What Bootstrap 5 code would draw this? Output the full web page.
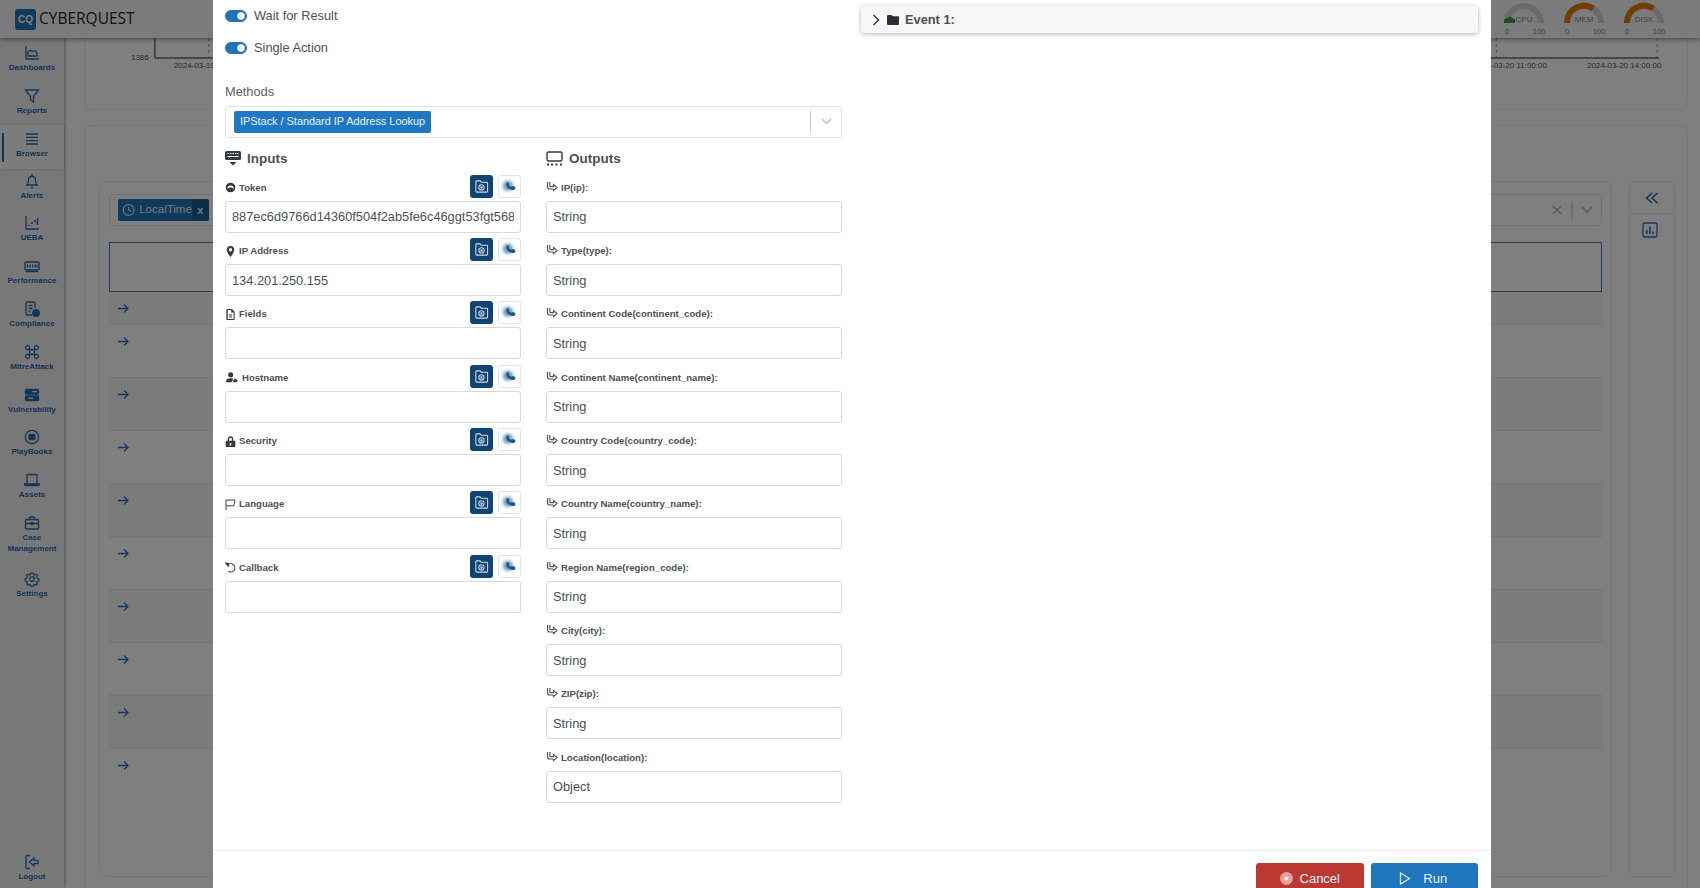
<!DOCTYPE html>
<html lang="en">
<head>
<meta charset="utf-8">
<title>CyberQuest</title>
<link href="https://cdn.jsdelivr.net/npm/bootstrap@5.3.0/dist/css/bootstrap.min.css" rel="stylesheet">
<script src="https://cdn.jsdelivr.net/npm/bootstrap@5.3.0/dist/js/bootstrap.bundle.min.js"></script>
<style>
html,body{height:888px;overflow:hidden;background:#fff;font-family:"Liberation Sans",Arial,sans-serif;color:#495057}
.app-top{height:38px;background:#f6f6f6;box-shadow:0 2px 4px rgba(0,0,0,.35);position:relative;z-index:3;padding-left:15px}
.brand-mark{width:21px;height:21px;background:#1f74b8;border-radius:3px;color:#fff;font-size:10px;font-weight:700;line-height:21px;text-align:center}
.brand-word{font-family:"Open Sans","Liberation Sans",sans-serif;font-size:15.500px;font-weight:500;color:#1c2430;margin-left:3px}
.gauge-set{margin-left:auto;padding-right:36px;gap:20px}
.gauge-set svg{overflow:visible}
.gauge-set text{font-family:"Liberation Sans",sans-serif;fill:#888;text-anchor:middle}
.app-body{height:850px}
.side-nav{width:64px;background:#f1f1f1;box-shadow:1px 0 3px rgba(0,0,0,.35);z-index:2;padding-top:3px}
.nav-cell{min-height:42.800px;color:#2a6cae;font-size:8px;font-weight:700;line-height:11.500px;text-align:center;padding-top:4px;position:relative}
.nav-cell svg{display:block;margin:0 auto 1px;width:16px;height:16px;fill:none;stroke:#2a6cae;stroke-width:1.300}
.nav-on{background:#f8f8f8;box-shadow:0 0 2px rgba(0,0,0,.25);margin-top:-2px;padding-top:6px;min-height:44px}
.nav-on::before{content:"";position:absolute;left:2px;top:8px;bottom:7px;width:1.500px;background:#1f6fb0}
.nav-case{min-height:56px}
.nav-foot{margin-top:auto;padding-bottom:6px;min-height:0}
.stage{padding-left:20px;padding-right:12px;overflow:hidden}
.panel-a{height:72px;border:1px solid #efefef;border-top:0;border-radius:0 0 8px 8px}
.panel-b{height:800px;margin-top:15px;border:1px solid #efefef;border-radius:8px;padding:55px 12px 0 14px;gap:17px}
.panel-main{height:696px;border:1px solid #ececec;border-radius:8px;padding:12px 9px 0}
.panel-side{width:46px;height:696px;border:1px solid #ececec;border-radius:6px 6px 0 0}
.side-tool{height:32px;border-bottom:1px solid #ececec}
.filter-bar{height:32px;border:1px solid #e3e3e3;border-radius:5px;padding:0 8px}
.time-chip{height:22px;background:#1f74b8;color:#eaf3fb;border-radius:2px;font-size:11.500px;width:91px;overflow:hidden}
.chip-x{margin-left:auto;background:#175d96;width:18px;height:22px;text-align:center;font-size:11px;font-weight:700;line-height:22px}
.query-box{height:50px;margin-top:16px;border:1px solid #4a7cba}
.data-row{height:53px;padding:11px 0 0 9px;border-bottom:1px solid #e8e8e8}
.data-row.first{height:33px}
.data-row.tint{background:#f7f7f7}
.sheet{display:block}
.sheet-dialog{max-width:none;width:1278px;margin:0 0 0 213px}
.sheet-dialog .modal-content{border:0;border-radius:0;height:900px;color:#495057}
.sheet-body{padding:0 13px 0 12px;height:850px;flex:none}
.twin{display:grid;grid-template-columns:617px 617px;column-gap:19px}
.switch-row{margin:0;padding:0;font-size:12.800px;line-height:16px;display:flex;align-items:center;gap:7px;height:32px}
.switch-row .form-check-input{width:22px;height:12px;margin:0;float:none;background-color:#1f74b8;border-color:#1f74b8}
.caption{font-size:12.800px;line-height:16px;margin:20px 0 6px;color:#5a6268}
.select-box{height:32px;border:1px solid #dfe2e8;border-radius:3px;padding:0 0 1px 8px}
.select-chip{height:22px;background:#2078c3;color:#eaf3fb;border-radius:2px;font-size:10.900px;line-height:21px;padding:0 6px}
.select-tail{margin-left:auto;width:31px;height:21px;border-left:1px solid #ccc}
.field-cols{display:grid;grid-template-columns:296px 296px;column-gap:25px}
.group-title{font-size:13.500px;font-weight:700;color:#495057;height:21.500px;margin-top:10px;gap:6px;line-height:22px}
.field-head{height:26px;font-size:9.600px;font-weight:700;line-height:12px;color:#495057;gap:3px;margin-top:5.330px}
.field-head svg.gl{width:11px;height:11px;flex:none;fill:#333a42}
.out-ic{width:12px;height:11px;fill:none;stroke:#555;stroke-width:1.200;flex:none;margin-top:-3px}
.square-btn{width:23px;height:23px;border-radius:3px;padding:0;display:flex;align-items:center;justify-content:center;margin-bottom:3px}
.sq-dark{background:#0f4573;margin-left:auto;margin-right:2px}
.sq-dark svg{width:15px;height:15px;fill:none;stroke:#cfdde9;stroke-width:1.100}
.sq-light{background:#fff;border:1px solid #e1e5ea}
.sq-light svg{width:17px;height:17px}
.text-field{height:32px;font-size:12.800px;padding:0 6px;border:1px solid #d5d9e0;border-radius:3px;color:#495057;background:#fff}
.text-field:focus{box-shadow:none}
.event-bar{height:27px;margin-top:6px;background:#f7f7f7;border-radius:3px;box-shadow:0 1px 5px rgba(0,0,0,.3);font-size:12.800px;font-weight:700;color:#495057;padding-left:11px;gap:6px}
.sheet-foot{height:50px;border-top:1px solid #e9e8f0;padding:12px 13px 0 0;display:flex;justify-content:flex-end;gap:7px;align-items:flex-start;flex-wrap:nowrap}
.foot-btn{width:107.500px;height:31px;margin:0;border-radius:3px;border:0;color:#eaf1f8;font-size:13px;padding:0;display:flex;align-items:center;justify-content:center;gap:7px}
.btn-stop{background:#bb3833}
.btn-stop:hover{background:#bb3833}
.btn-go{background:#2076bd;gap:12px;padding-right:2px}
.btn-go:hover{background:#2076bd}
</style>
</head>
<body>
<svg width="0" height="0" class="position-absolute">
<defs>
<filter id="soft" x="-50%" y="-50%" width="200%" height="200%"><feGaussianBlur stdDeviation="1.300"/></filter>
<symbol id="cam" viewBox="0 0 16 16"><path d="M3 2h3.500l1.200 1.500h5.800a1 1 0 0 1 1 1v8.500a1 1 0 0 1-1 1h-10.500a1 1 0 0 1-1-1V3a1 1 0 0 1 1-1z"/><circle cx="8" cy="9" r="2.800"/><circle cx="8" cy="9" r=".8"/></symbol>
<symbol id="blob" viewBox="0 0 16 16"><circle cx="6.500" cy="7.500" r="4.800" fill="#6f9cc2" filter="url(#soft)"/><path d="M6.500 4c1 .2 1.200 2 .9 2.800.8 1 1.500 1.300 2.300 1.400.8-.7 3.600-.5 3.800.9.200 1.500-1 2.500-2.900 2.200C8 10.800 5 8.500 5 6c0-1.200.6-2.100 1.500-2z" fill="#1d5587"/></symbol>
<symbol id="link" viewBox="0 0 12 11"><path d="M1.500 1v4.500c0 1.500 1 2.500 2.500 2.500h3"/><path d="M3.800 1v3.500c0 .8.400 1.200 1.200 1.200h2.500V3.500l3.500 3-3.500 3V8"/></symbol>
<symbol id="fwd" viewBox="0 0 11 11"><path d="M0 5.500h10M6 1.500l4 4-4 4"/></symbol>
</defs>
</svg>

<div class="app-top d-flex align-items-center">
  <div class="brand-mark">CQ</div>
  <div class="brand-word">CYBERQUEST</div>
  <div class="gauge-set d-flex">
    <svg width="40" height="33" viewBox="0 0 40 33"><path d="M0 20a20 20 0 0 1 40 0h-6a14 14 0 0 0-28 0z" fill="#d4d4d4"/><path d="M0 20v-3.500l6-3 5 3v3.500z" fill="#3f9a3a"/><text x="20" y="19" font-size="8">CPU</text><text x="3" y="31" font-size="7.600">0</text><text x="35" y="31" font-size="7.600">100</text></svg>
    <svg width="40" height="33" viewBox="0 0 40 33"><path d="M0 20a20 20 0 0 1 40 0h-6a14 14 0 0 0-28 0z" fill="#d4d4d4"/><path d="M0 20a20 20 0 0 1 31-17l-3.500 5A14 14 0 0 0 6 20z" fill="#e57a00"/><text x="20" y="19" font-size="8">MEM</text><text x="3" y="31" font-size="7.600">0</text><text x="35" y="31" font-size="7.600">100</text></svg>
    <svg width="40" height="33" viewBox="0 0 40 33"><path d="M0 20a20 20 0 0 1 40 0h-6a14 14 0 0 0-28 0z" fill="#d4d4d4"/><path d="M0 20a20 20 0 0 1 31-17l-3.500 5A14 14 0 0 0 6 20z" fill="#e57a00"/><text x="20" y="19" font-size="8">DISK</text><text x="3" y="31" font-size="7.600">0</text><text x="35" y="31" font-size="7.600">100</text></svg>
  </div>
</div>

<div class="app-body d-flex">
  <nav class="side-nav d-flex flex-column">
    <div class="nav-cell"><svg viewBox="0 0 16 16"><path d="M2 1v13h13"/><path d="M4 11V7l2.500-2 2 1.500 2-1 2.500 2v3.500z"/></svg>Dashboards</div>
    <div class="nav-cell"><svg viewBox="0 0 16 16"><path d="M1.500 2h13L9.500 8.500V14l-3-2V8.500z"/></svg>Reports</div>
    <div class="nav-cell nav-on"><svg viewBox="0 0 16 16"><path d="M2 3h12M2 6.300h12M2 9.600h12M2 13h12"/></svg>Browser</div>
    <div class="nav-cell"><svg viewBox="0 0 16 16"><path d="M3 12c1-1 1.500-2 1.500-5a3.500 3.500 0 0 1 7 0c0 3 .5 4 1.500 5z"/><path d="M7 14.500h2M8 1v2"/></svg>Alerts</div>
    <div class="nav-cell"><svg viewBox="0 0 16 16"><path d="M2 1v13h13"/><path d="M5 11v-1M8 9V7M11 7V5M13.500 10V3" stroke-width="1.500"/></svg>UEBA</div>
    <div class="nav-cell"><svg viewBox="0 0 16 16"><rect x="1" y="4" width="14" height="8" rx="1"/><path d="M3.500 6.500v3M6 6.500v3M8.500 6.500v3M11 6.500v3M13 6.500v3M2 13.500h12"/></svg>Performance</div>
    <div class="nav-cell"><svg viewBox="0 0 16 16"><path d="M11 7V2a1 1 0 0 0-1-1H3a1 1 0 0 0-1 1v11a1 1 0 0 0 1 1h5"/><path d="M4.500 4.500h4M4.500 7.500h4M4.500 10.500h2"/><circle cx="12" cy="12" r="3.300" fill="#2a6cae"/></svg>Compliance</div>
    <div class="nav-cell"><svg viewBox="0 0 16 16"><path d="M5.500 5.500h5v5h-5zM5.500 5.500H4A2 2 0 1 1 5.500 4zM10.500 5.500H12A2 2 0 1 0 10.500 4zM5.500 10.500H4A2 2 0 1 0 5.500 12zM10.500 10.500H12A2 2 0 1 1 10.500 12z"/></svg>MitreAttack</div>
    <div class="nav-cell"><svg viewBox="0 0 16 16"><rect x="1.500" y="2.500" width="13" height="4.500" rx="1" fill="#2a6cae"/><rect x="1.500" y="9" width="13" height="4.500" rx="1" fill="#2a6cae"/><path d="M8 4.700h5M4 11.200h5" stroke="#f1f1f1"/></svg>Vulnerability</div>
    <div class="nav-cell"><svg viewBox="0 0 16 16"><circle cx="8" cy="8" r="6.700"/><rect x="5.200" y="5.500" width="2.300" height="5" rx=".6" fill="#2a6cae"/><rect x="8.500" y="5.500" width="2.300" height="5" rx=".6" fill="#2a6cae"/></svg>PlayBooks</div>
    <div class="nav-cell"><svg viewBox="0 0 16 16"><path d="M3 11V3.500a1 1 0 0 1 1-1h8a1 1 0 0 1 1 1V11"/><path d="M.5 12h15c0 1-.7 1.500-1.500 1.500H2c-.8 0-1.500-.5-1.500-1.500z"/></svg>Assets</div>
    <div class="nav-cell nav-case"><svg viewBox="0 0 16 16"><rect x="1.500" y="4.500" width="13" height="9.500" rx="1"/><path d="M5.500 4.500V3a1 1 0 0 1 1-1h3a1 1 0 0 1 1 1v1.500M1.500 8.500h13"/><rect x="7" y="7.700" width="2" height="1.600" fill="#2a6cae"/></svg>Case<br>Management</div>
    <div class="nav-cell"><svg viewBox="0 0 16 16"><circle cx="8" cy="8" r="2.300"/><path d="M6.800 1.200h2.400l.4 1.800 1.300.6 1.600-1 1.700 1.700-1 1.600.6 1.300 1.800.4v2.400l-1.800.4-.6 1.300 1 1.600-1.700 1.700-1.600-1-1.300.6-.4 1.800H6.800l-.4-1.800-1.300-.6-1.600 1-1.700-1.700 1-1.600-.6-1.300-1.800-.4V7.600l1.800-.4.600-1.300-1-1.600 1.700-1.700 1.600 1 1.300-.6z" transform="translate(.8 .8) scale(.9)"/></svg>Settings</div>
    <div class="nav-cell nav-foot"><svg viewBox="0 0 16 16"><path d="M6 1.500H3a1 1 0 0 0-1 1v11a1 1 0 0 0 1 1h3"/><path d="M5.500 8l4.500-4v2.300h4v3.400h-4V12z"/></svg>Logout</div>
  </nav>

  <main class="stage flex-grow-1">
    <div class="panel-a">
      <svg width="100%" height="40" viewBox="0 0 1604 40" class="d-block">
        <path d="M70 0v20H1576" stroke="#222" fill="none"/>
        <path d="M124 0v20M1413 0v20M1574 0v20" stroke="#999" stroke-dasharray="3 3" fill="none"/>
        <text x="46" y="22" font-size="8" fill="#555" font-family="Liberation Sans">1386</text>
        <text x="89" y="30" font-size="8" fill="#555" font-family="Liberation Sans">2024-03-19</text>
        <text x="1390" y="30" font-size="8" fill="#555" font-family="Liberation Sans">2024-03-20 11:00:00</text>
        <text x="1504" y="30" font-size="8" fill="#555" font-family="Liberation Sans">2024-03-20 14:00:00</text>
      </svg>
    </div>
    <div class="panel-b d-flex">
      <div class="panel-main flex-grow-1">
        <div class="filter-bar d-flex align-items-center">
          <div class="time-chip d-flex align-items-center"><svg width="14" height="14" viewBox="0 0 16 16" class="mx-1 flex-none" fill="none" stroke="#dfeaf4" stroke-width="1.400"><circle cx="8" cy="8" r="6.500"/><path d="M8 4v4.300l3 1.500"/></svg>LocalTime<span class="chip-x">x</span></div>
          <svg class="ms-auto" width="44" height="22" viewBox="0 0 44 22" fill="none" stroke="#bbb" stroke-width="1.500"><path d="M4 7l8 8M12 7l-8 8"/><path d="M23 2v18" stroke-width="1"/><path d="M33 8l5 5 5-5"/></svg>
        </div>
        <div class="query-box"></div>
        <div class="data-row first tint"><svg width="11" height="11" fill="none" stroke="#2f68d0" stroke-width="1.300" class="d-block"><use href="#fwd"/></svg></div>
        <div class="data-row"><svg width="11" height="11" fill="none" stroke="#2f68d0" stroke-width="1.300" class="d-block"><use href="#fwd"/></svg></div>
        <div class="data-row tint"><svg width="11" height="11" fill="none" stroke="#2f68d0" stroke-width="1.300" class="d-block"><use href="#fwd"/></svg></div>
        <div class="data-row"><svg width="11" height="11" fill="none" stroke="#2f68d0" stroke-width="1.300" class="d-block"><use href="#fwd"/></svg></div>
        <div class="data-row tint"><svg width="11" height="11" fill="none" stroke="#2f68d0" stroke-width="1.300" class="d-block"><use href="#fwd"/></svg></div>
        <div class="data-row"><svg width="11" height="11" fill="none" stroke="#2f68d0" stroke-width="1.300" class="d-block"><use href="#fwd"/></svg></div>
        <div class="data-row tint"><svg width="11" height="11" fill="none" stroke="#2f68d0" stroke-width="1.300" class="d-block"><use href="#fwd"/></svg></div>
        <div class="data-row"><svg width="11" height="11" fill="none" stroke="#2f68d0" stroke-width="1.300" class="d-block"><use href="#fwd"/></svg></div>
        <div class="data-row tint"><svg width="11" height="11" fill="none" stroke="#2f68d0" stroke-width="1.300" class="d-block"><use href="#fwd"/></svg></div>
        <div class="data-row border-0"><svg width="11" height="11" fill="none" stroke="#2f68d0" stroke-width="1.300" class="d-block"><use href="#fwd"/></svg></div>
      </div>
      <div class="panel-side">
        <div class="side-tool d-flex justify-content-center align-items-center"><svg width="14" height="14" viewBox="0 0 14 14" fill="none" stroke="#2a6cae" stroke-width="1.600"><path d="M7 2L1.500 7 7 12M12.500 2L7 7l5.500 5"/></svg></div>
        <div class="d-flex justify-content-center pt-2 pe-1"><svg width="16" height="16" viewBox="0 0 16 16" fill="none" stroke="#2a6cae" stroke-width="1.300"><rect x="1" y="1" width="14" height="14" rx="1.500"/><path d="M4.800 12V8M8 12V4.500M11.200 12V9.500" stroke-width="1.600"/></svg></div>
      </div>
    </div>
  </main>
</div>

<div class="modal-backdrop fade show"></div>

<div class="modal sheet" tabindex="-1">
  <div class="modal-dialog sheet-dialog">
    <div class="modal-content">
      <div class="modal-body sheet-body">
        <div class="twin">
          <div>
            <div class="form-check form-switch switch-row"><input class="form-check-input" type="checkbox" role="switch" checked id="sw1"><label for="sw1">Wait for Result</label></div>
            <div class="form-check form-switch switch-row"><input class="form-check-input" type="checkbox" role="switch" checked id="sw2"><label for="sw2">Single Action</label></div>
            <div class="caption">Methods</div>
            <div class="select-box d-flex align-items-center">
              <span class="select-chip">IPStack / Standard IP Address Lookup</span>
              <span class="select-tail d-flex align-items-center justify-content-center"><svg width="11" height="7" viewBox="0 0 11 7" fill="none" stroke="#bbb" stroke-width="1.300"><path d="M1 1l4.500 4.500L10 1"/></svg></span>
            </div>
            <div class="field-cols">
              <div>
                <div class="group-title d-flex align-items-center"><svg width="16" height="15" viewBox="0 0 16 15" fill="#333a42"><path d="M1.500 0h13A1.500 1.500 0 0 1 16 1.500v6A1.500 1.500 0 0 1 14.500 9h-13A1.500 1.500 0 0 1 0 7.500v-6A1.500 1.500 0 0 1 1.500 0z"/><path d="M2.500 2.500h1.500M5 2.500h1.500M7.500 2.500H9M10 2.500h1.500M12 2.500h1.500M2.500 5.500h11" stroke="#fff" stroke-width="1.200"/><path d="M4.500 11h7L8 14.500z"/></svg>Inputs</div>

                <div class="field-head d-flex align-items-center"><svg class="gl" viewBox="0 0 16 16"><path d="M8 1a7 7 0 1 0 0 14A7 7 0 0 0 8 1zM3.500 9.500c-.5-3 2-4.500 4.500-4.500s5 1.500 4.500 4.500c-1.200.2-2-.7-2.500-1.500H6c-.5.8-1.300 1.700-2.500 1.500z" fill-rule="evenodd"/></svg><span>Token</span><button type="button" class="btn square-btn sq-dark"><svg><use href="#cam"/></svg></button><button type="button" class="btn square-btn sq-light"><svg><use href="#blob"/></svg></button></div>
                <input class="form-control text-field" value="887ec6d9766d14360f504f2ab5fe6c46ggt53fgt568">

                <div class="field-head d-flex align-items-center"><svg class="gl" viewBox="0 0 16 16"><path d="M8 0a5.500 5.500 0 0 0-5.500 5.500C2.500 9.500 8 16 8 16s5.500-6.500 5.500-10.500A5.500 5.500 0 0 0 8 0zm0 8a2.500 2.500 0 1 1 0-5 2.500 2.500 0 0 1 0 5z"/></svg><span>IP Address</span><button type="button" class="btn square-btn sq-dark"><svg><use href="#cam"/></svg></button><button type="button" class="btn square-btn sq-light"><svg><use href="#blob"/></svg></button></div>
                <input class="form-control text-field" value="134.201.250.155">

                <div class="field-head d-flex align-items-center"><svg class="gl" viewBox="0 0 16 16"><path d="M3 0h7l4 4v10.500a1.500 1.500 0 0 1-1.500 1.500h-9A1.500 1.500 0 0 1 2 14.500v-13A1.500 1.500 0 0 1 3 0zm1 1.500v13h8.500V5H9V1.500zM5.500 8h5v1.500h-5zM5.500 11h5v1.500h-5z" fill-rule="evenodd"/></svg><span>Fields</span><button type="button" class="btn square-btn sq-dark"><svg><use href="#cam"/></svg></button><button type="button" class="btn square-btn sq-light"><svg><use href="#blob"/></svg></button></div>
                <input class="form-control text-field">

                <div class="field-head d-flex align-items-center"><svg class="gl" style="width:14px" viewBox="0 0 18 16"><circle cx="7" cy="4" r="3.700"/><path d="M0 15c0-4 2.500-6 7-6 1.500 0 2.700.2 3.700.7L8.500 15z"/><path d="M10 13l3-3.500 4.500 2.500-2 3h-4z"/></svg><span>Hostname</span><button type="button" class="btn square-btn sq-dark"><svg><use href="#cam"/></svg></button><button type="button" class="btn square-btn sq-light"><svg><use href="#blob"/></svg></button></div>
                <input class="form-control text-field">

                <div class="field-head d-flex align-items-center"><svg class="gl" viewBox="0 0 16 16"><path d="M4 7V4.500a4 4 0 0 1 8 0V7h1.500A1 1 0 0 1 15 8v7a1 1 0 0 1-1 1H2a1 1 0 0 1-1-1V8a1 1 0 0 1 1-1zm2 0h4V4.500a2 2 0 0 0-4 0zm2 3a1.500 1.500 0 0 0-.7 2.800V14h1.400v-1.200A1.500 1.500 0 0 0 8 10z" fill-rule="evenodd"/></svg><span>Security</span><button type="button" class="btn square-btn sq-dark"><svg><use href="#cam"/></svg></button><button type="button" class="btn square-btn sq-light"><svg><use href="#blob"/></svg></button></div>
                <input class="form-control text-field">

                <div class="field-head d-flex align-items-center"><svg class="gl" viewBox="0 0 16 16" style="fill:none;stroke:#333a42;stroke-width:1.400"><path d="M1.500 16V1.500h13L13 10H1.500"/></svg><span>Language</span><button type="button" class="btn square-btn sq-dark"><svg><use href="#cam"/></svg></button><button type="button" class="btn square-btn sq-light"><svg><use href="#blob"/></svg></button></div>
                <input class="form-control text-field">

                <div class="field-head d-flex align-items-center"><svg class="gl" viewBox="0 0 16 16" style="fill:none;stroke:#333a42;stroke-width:1.500"><path d="M3.500 5A6 6 0 1 1 5 13.500"/><path d="M1 1.500l4 .5-.5 4z" fill="#333a42"/></svg><span>Callback</span><button type="button" class="btn square-btn sq-dark"><svg><use href="#cam"/></svg></button><button type="button" class="btn square-btn sq-light"><svg><use href="#blob"/></svg></button></div>
                <input class="form-control text-field">
              </div>

              <div>
                <div class="group-title d-flex align-items-center"><svg width="17" height="15" viewBox="0 0 17 15" fill="none" stroke="#333a42" stroke-width="1.400"><rect x="1" y="1" width="15" height="9" rx="1.500"/><path d="M1 13.500h2M5 13.500h2M9.500 13.500h2M14 13.500h2" stroke-width="1.800"/></svg>Outputs</div>
                <div class="field-head d-flex align-items-center"><svg class="out-ic"><use href="#link"/></svg><span>IP(ip):</span></div>
                <input class="form-control text-field" value="String">
                <div class="field-head d-flex align-items-center"><svg class="out-ic"><use href="#link"/></svg><span>Type(type):</span></div>
                <input class="form-control text-field" value="String">
                <div class="field-head d-flex align-items-center"><svg class="out-ic"><use href="#link"/></svg><span>Continent Code(continent_code):</span></div>
                <input class="form-control text-field" value="String">
                <div class="field-head d-flex align-items-center"><svg class="out-ic"><use href="#link"/></svg><span>Continent Name(continent_name):</span></div>
                <input class="form-control text-field" value="String">
                <div class="field-head d-flex align-items-center"><svg class="out-ic"><use href="#link"/></svg><span>Country Code(country_code):</span></div>
                <input class="form-control text-field" value="String">
                <div class="field-head d-flex align-items-center"><svg class="out-ic"><use href="#link"/></svg><span>Country Name(country_name):</span></div>
                <input class="form-control text-field" value="String">
                <div class="field-head d-flex align-items-center"><svg class="out-ic"><use href="#link"/></svg><span>Region Name(region_code):</span></div>
                <input class="form-control text-field" value="String">
                <div class="field-head d-flex align-items-center"><svg class="out-ic"><use href="#link"/></svg><span>City(city):</span></div>
                <input class="form-control text-field" value="String">
                <div class="field-head d-flex align-items-center"><svg class="out-ic"><use href="#link"/></svg><span>ZIP(zip):</span></div>
                <input class="form-control text-field" value="String">
                <div class="field-head d-flex align-items-center"><svg class="out-ic"><use href="#link"/></svg><span>Location(location):</span></div>
                <input class="form-control text-field" value="Object">
              </div>
            </div>
          </div>
          <div>
            <div class="event-bar d-flex align-items-center"><svg width="9" height="12" viewBox="0 0 9 12" fill="none" stroke="#333a42" stroke-width="1.500"><path d="M1.500 1l5 5-5 5"/></svg><svg width="12" height="10" viewBox="0 0 12 10" fill="#2a3038"><path d="M1 0h3.500l1.200 1.300H11a1 1 0 0 1 1 1V9a1 1 0 0 1-1 1H1a1 1 0 0 1-1-1V1a1 1 0 0 1 1-1z"/></svg><span>Event 1:</span></div>
          </div>
        </div>
      </div>
      <div class="sheet-foot modal-footer">
        <button type="button" class="btn foot-btn btn-stop"><svg width="13" height="13" viewBox="0 0 13 13"><circle cx="6.500" cy="6.500" r="6.500" fill="#e5a09d"/><path d="M4.700 4.700l3.600 3.600M8.300 4.700l-3.600 3.600" stroke="#fff" stroke-width="1.300"/></svg>Cancel</button>
        <button type="button" class="btn foot-btn btn-go"><svg width="12" height="13" viewBox="0 0 12 13" fill="none" stroke="#d8e6f3" stroke-width="1.300"><path d="M1.500 1l9 5.500-9 5.500z"/></svg>Run</button>
      </div>
    </div>
  </div>
</div>
</body>
</html>
